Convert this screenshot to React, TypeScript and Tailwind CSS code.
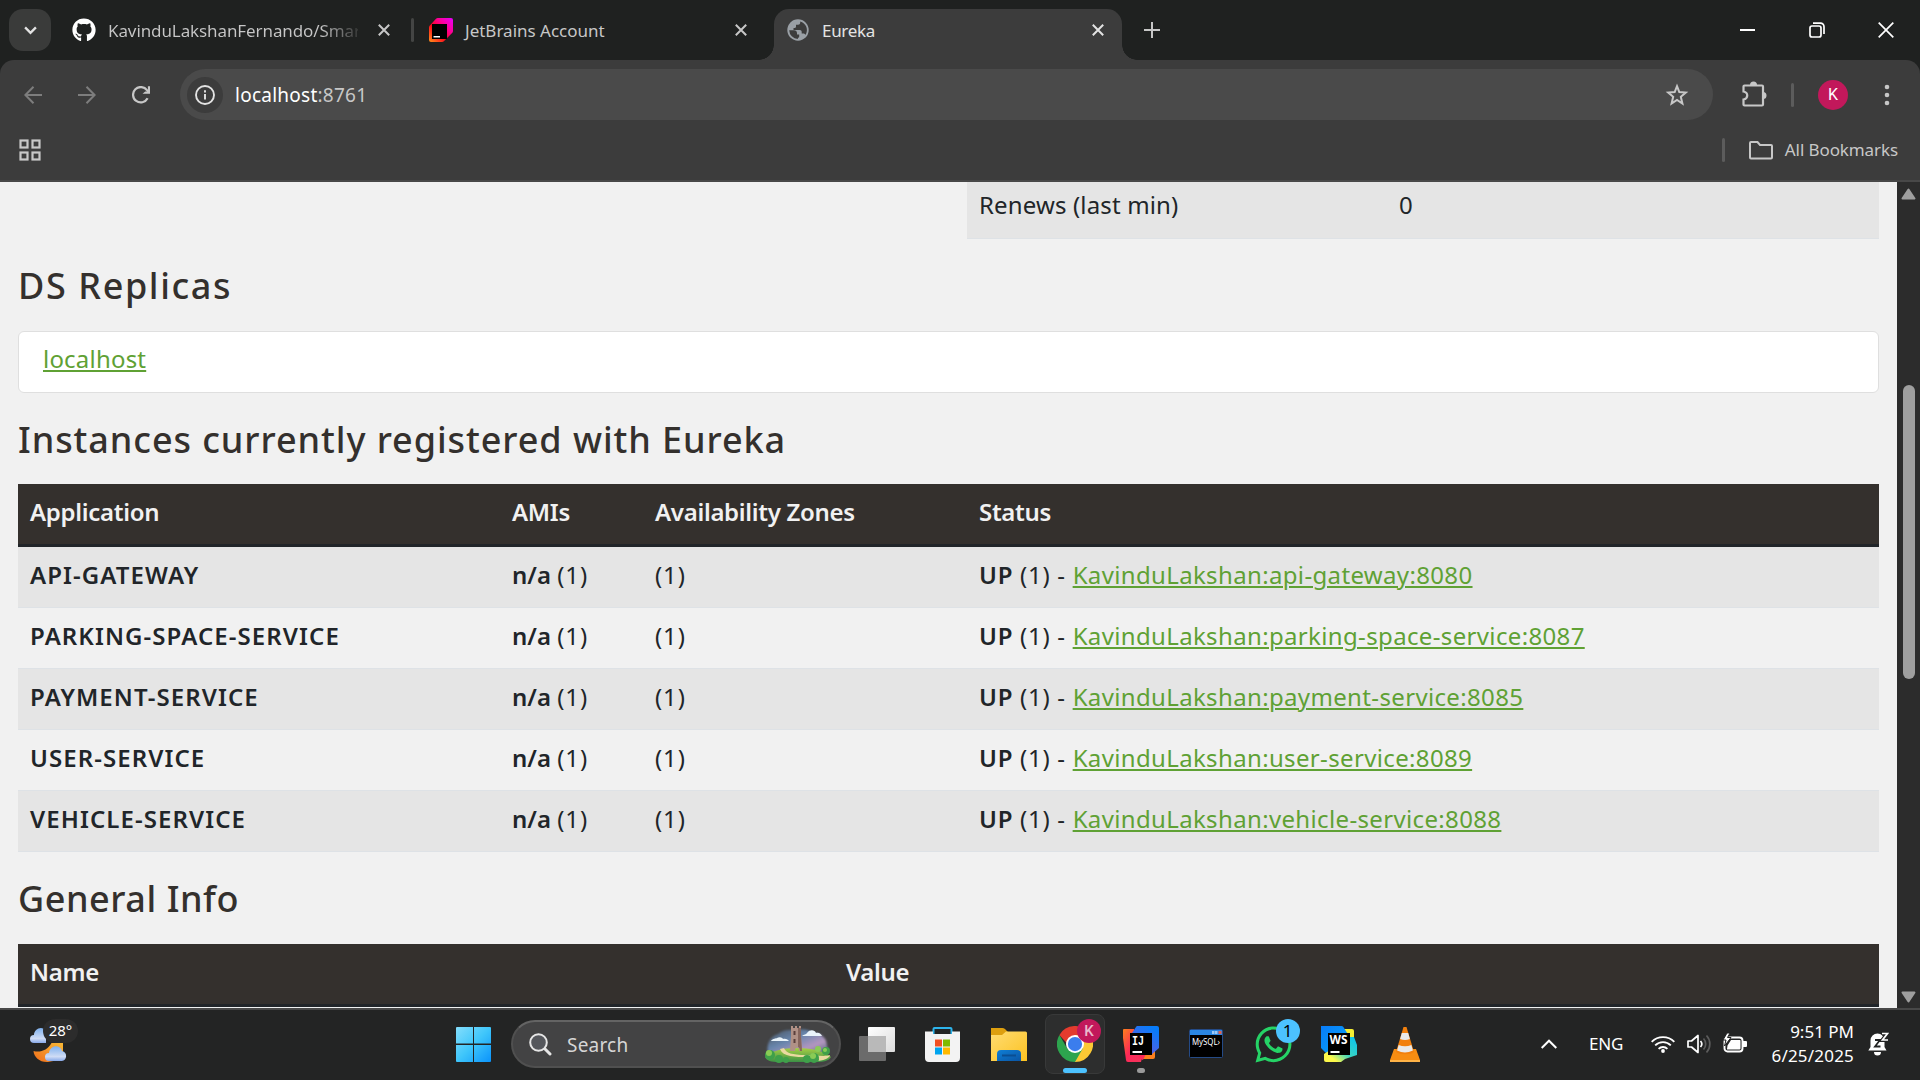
import type { ReactNode } from 'react';
import { FaGithub, FaWhatsapp } from 'react-icons/fa';

const instances = [
  { name: 'API-GATEWAY', link: 'KavinduLakshan:api-gateway:8080' },
  { name: 'PARKING-SPACE-SERVICE', link: 'KavinduLakshan:parking-space-service:8087' },
  { name: 'PAYMENT-SERVICE', link: 'KavinduLakshan:payment-service:8085' },
  { name: 'USER-SERVICE', link: 'KavinduLakshan:user-service:8089' },
  { name: 'VEHICLE-SERVICE', link: 'KavinduLakshan:vehicle-service:8088' },
];

function CloseX({ className }: { className: string }) {
  return (
    <svg viewBox="0 0 12 12" className={className} fill="none" stroke="currentColor" strokeWidth="2">
      <path d="M.8.8l10.4 10.4M11.2.8L.8 11.2" />
    </svg>
  );
}

function JetBrainsLogo() {
  return (
    <svg viewBox="0 0 24 24" className="ml-[15px] size-6 shrink-0">
      <defs>
        <linearGradient id="jb" x1="0" y1="1" x2="1" y2="0">
          <stop offset="0" stopColor="#ff9419" />
          <stop offset=".4" stopColor="#ff021d" />
          <stop offset=".65" stopColor="#ff0090" />
          <stop offset="1" stopColor="#e600ff" />
        </linearGradient>
      </defs>
      <path d="M9 0h13a2 2 0 0 1 2 2v11a3 3 0 0 1-.9 2.100l-8 8A3 3 0 0 1 13 24H2a2 2 0 0 1-2-2V9.500A3 3 0 0 1 .8 7.500l6-6.600A3 3 0 0 1 9 0z" fill="url(#jb)" />
      <path d="M3 6h15v15H3z" fill="#000" />
      <path d="M4.500 18h6.500v1.500H4.500z" fill="#fff" />
    </svg>
  );
}

function Globe() {
  return (
    <svg viewBox="0 0 22 22" className="ml-[13px] size-[22px] shrink-0">
      <circle cx="11" cy="11" r="10.700" fill="#9aa0a6" />
      <path d="M2.200 11.300H7c1.900 0 3 1.100 3 3v1.200h2.200v2c0 1-.8 1.300-1.300 1.500v1A9 9 0 0 1 2.200 11.300zM13.200 2.400v1.300c0 1.200-.9 2-2 2H9v2c0 .700-.500 1.200-1.200 1.200H6.500v2h6.200c1.300 0 2 .9 2 2v1.700h1.500c1.200 0 2 .6 2.300 1.300A9 9 0 0 0 13.200 2.400z" fill="#3c3c3c" />
    </svg>
  );
}

function TabStrip() {
  return (
    <div className="flex h-[60px] shrink-0 items-center bg-[#1f2120] text-[17px] text-[#c7c7c7]">
      <div className="ml-[9px] flex h-[42px] w-[42px] items-center justify-center rounded-[14px] bg-[#3a3b3a]">
        <svg viewBox="0 0 14 10" className="h-[9px] w-[13px]" fill="none" stroke="#e3e3e3" strokeWidth="2.600"><path d="M1 1.500l6 6 6-6" /></svg>
      </div>
      <FaGithub className="ml-[21px] size-6 shrink-0 text-white" />
      <div className="ml-3 w-[250px] bg-linear-to-r from-[#c7c7c7] from-85% to-[#3a3b3a] bg-clip-text pt-[2px] leading-6 tracking-[-0.100px] whitespace-nowrap text-transparent">KavinduLakshanFernando/Smar</div>
      <CloseX className="ml-5 size-3 shrink-0" />
      <div className="ml-[21px] h-6 w-[3px] rounded bg-[#444544]" />
      <JetBrainsLogo />
      <div className="ml-3 w-[250px] pt-[2px] leading-6">JetBrains Account</div>
      <CloseX className="ml-5 size-3 shrink-0" />
      <div className="ml-3 flex h-[51px] w-[378px] shrink-0 items-end self-end">
        <div className="size-[15px] shrink-0 bg-[radial-gradient(circle_at_0_0,transparent_14.500px,#3c3c3c_15px)]" />
        <div className="flex h-[51px] w-[348px] shrink-0 items-center rounded-t-[15px] bg-[#3c3c3c] pb-[9px] text-[#e3e3e3]">
          <Globe />
          <div className="ml-[13px] w-[270px] pt-[2px] leading-6 tracking-[-0.3px]">Eureka</div>
          <CloseX className="size-3 shrink-0" />
        </div>
        <div className="size-[15px] shrink-0 bg-[radial-gradient(circle_at_100%_0,transparent_14.500px,#3c3c3c_15px)]" />
      </div>
      <svg viewBox="0 0 16 16" className="ml-[7px] size-4 shrink-0" stroke="currentColor" strokeWidth="2"><path d="M8 0v16M0 8h16" /></svg>
      <div className="ml-auto flex items-center text-white">
        <div className="h-[2px] w-[15px] bg-white" />
        <svg viewBox="0 0 16 16" className="ml-[54px] size-4" fill="none" stroke="currentColor" strokeWidth="1.700">
          <rect x="1" y="4" width="11" height="11" rx="2" />
          <path d="M4 1.200h7.500a3.500 3.500 0 0 1 3.500 3.500V12" />
        </svg>
        <svg viewBox="0 0 16 16" className="mr-[26px] ml-[53px] size-4" stroke="currentColor" strokeWidth="1.700"><path d="M.7.7l14.600 14.600M15.300.7L.7 15.300" /></svg>
      </div>
    </div>
  );
}

function Toolbar() {
  return (
    <div className="h-[122px] shrink-0 bg-[#1f2120]">
      <div className="h-[122px] rounded-t-[14px] border-b-2 border-[#484848] bg-[#3c3c3c] text-[#c7c7c7]">
        <div className="flex h-[69px] items-center">
          <svg viewBox="0 0 18 18" className="ml-6 size-[18px]" fill="none" stroke="#7d7d7d" strokeWidth="2"><path d="M18 9H1.500M9.500.8L1.400 9l8.100 8.200" /></svg>
          <svg viewBox="0 0 18 18" className="ml-9 size-[18px]" fill="none" stroke="#7d7d7d" strokeWidth="2"><path d="M0 9h16.500M8.500.8L16.600 9l-8.100 8.200" /></svg>
          <svg viewBox="0 0 18 18" className="ml-9 size-[18px]">
            <path d="M15.600 12.300A7.700 7.700 0 1 1 15 4.200l1.700 2.200" fill="none" stroke="#c7c7c7" strokeWidth="2.200" />
            <path d="M18 .3v7.500h-7.500l2.700-2.300h2.700V.3z" fill="#c7c7c7" />
          </svg>
          <div className="ml-[30px] flex h-[51px] w-[1533px] items-center rounded-full bg-[#4a4a4a]">
            <div className="ml-[7px] flex size-9 items-center justify-center rounded-full bg-[#3c3c3c]">
              <svg viewBox="0 0 20 20" className="size-5" fill="none" stroke="#e3e3e3" strokeWidth="1.900"><circle cx="10" cy="10" r="9" /><path d="M10 9v5.500M10 5.200v2.200" /></svg>
            </div>
            <div className="ml-3 text-[19px] leading-6 tracking-[0.250px]"><span className="text-white">localhost</span>:8761</div>
            <svg viewBox="0 0 24 24" className="mr-6 ml-auto size-6" fill="none" stroke="#c7c7c7" strokeWidth="2"><path d="M12 3.200l2.300 5.900 6.500.5-5 4.200 1.600 6.700L12 16.900l-5.400 3.600 1.600-6.700-5-4.200 6.500-.5z" /></svg>
          </div>
          <svg viewBox="0 0 26 26" className="-mt-px ml-7 size-[26px]">
            <path d="M3.500 4.500h17.500a1 1 0 0 1 1 1v18a1 1 0 0 1-1 1H3.500a1 1 0 0 1-1-1v-5c5-1 5-7 0-8v-5a1 1 0 0 1 1-1z" fill="none" stroke="#c7c7c7" strokeWidth="2.200" />
            <path d="M9 4a3.500 3.500 0 0 1 7 0zM22 11a3.500 3.500 0 0 1 0 7z" fill="#c7c7c7" />
          </svg>
          <div className="ml-6 h-6 w-[3px] rounded bg-[#5c5c5c]" />
          <div className="ml-6 flex size-[30px] items-center justify-center rounded-full bg-[#c2185b] pt-px font-['Roboto'] text-base text-white">K</div>
          <svg viewBox="0 0 6 22" className="ml-9 h-[22px] w-[6px]" fill="#c7c7c7"><circle cx="3" cy="3" r="2.300" /><circle cx="3" cy="11" r="2.300" /><circle cx="3" cy="19" r="2.300" /></svg>
        </div>
        <div className="flex h-[42px] items-center">
          <svg viewBox="0 0 22 22" className="ml-[19px] size-[22px]" fill="none" stroke="#c7c7c7" strokeWidth="2.200">
            <rect x="1.500" y="1.500" width="7" height="7" /><rect x="13.500" y="1.500" width="7" height="7" /><rect x="1.500" y="13.500" width="7" height="7" /><rect x="13.500" y="13.500" width="7" height="7" />
          </svg>
          <div className="ml-auto h-6 w-[3px] rounded bg-[#5c5c5c]" />
          <svg viewBox="0 0 24 20" className="ml-6 h-5 w-6" fill="none" stroke="#c7c7c7" strokeWidth="2"><path d="M2 2h6.500l2.500 3h11a1 1 0 0 1 1 1v11.500a1 1 0 0 1-1 1H2a1 1 0 0 1-1-1V3a1 1 0 0 1 1-1z" /></svg>
          <div className="mr-[22px] ml-3 text-[17px] leading-6 tracking-[-0.1px] whitespace-nowrap">All Bookmarks</div>
        </div>
      </div>
    </div>
  );
}

function Link({ children }: { children: ReactNode }) {
  return <a className="text-[#5fa134] underline decoration-2 underline-offset-2">{children}</a>;
}

function EurekaPage() {
  return (
    <div className="h-full w-[1897px] overflow-hidden bg-[#f1f1f1] pr-[18px] pl-[18px] text-[24px] leading-9 text-[#212529]">
      <div className="ml-[949px] grid h-[57px] grid-cols-[420px_1fr] border-b border-[#dee2e6] bg-[#e5e5e5] px-3 pt-[5px]">
        <div className="tracking-[0.15px]">Renews (last min)</div>
        <div className="tracking-[0.200px]">0</div>
      </div>
      <h1 className="mt-[25px] text-[36px] leading-[43px] font-medium tracking-[1.600px] text-[#34302d]">DS Replicas</h1>
      <div className="mt-6 h-[62px] rounded-md border border-[#dfdfdf] bg-white pt-[9px] pl-6 leading-9 tracking-[0.200px]"><Link>localhost</Link></div>
      <h1 className="mt-[25px] text-[36px] leading-[43px] font-medium tracking-[0.930px] text-[#34302d]">Instances currently registered with Eureka</h1>
      <div className="mt-[23px]">
        <div className="grid h-[63px] grid-cols-[482px_143px_324px_1fr] border-b-[3px] border-[#212529] bg-[#34302d] pt-[10px] pl-3 font-semibold tracking-[-0.300px] text-[#f1f1f1]">
          <div>Application</div><div>AMIs</div><div>Availability Zones</div><div>Status</div>
        </div>
        {instances.map((row) => (
          <div key={row.name} className="grid h-[61px] grid-cols-[482px_143px_324px_1fr] border-b border-[#dee2e6] pt-[10px] pl-3 odd:bg-[#f1f1f1] even:bg-[#e5e5e5]">
            <div className="font-semibold tracking-[1.080px]">{row.name}</div>
            <div><b className="font-semibold">n/a</b> <span className="tracking-[0.900px]">(1)</span></div>
            <div className="tracking-[0.900px]">(1)</div>
            <div className="tracking-[0.350px]"><b className="font-semibold tracking-[0.900px]">UP</b> <span className="tracking-[0.700px]">(1) - </span><Link>{row.link}</Link></div>
          </div>
        ))}
      </div>
      <h1 className="mt-[25px] text-[36px] leading-[43px] font-medium tracking-[0.550px] text-[#34302d]">General Info</h1>
      <div className="mt-6 grid h-[63px] grid-cols-[816px_1fr] border-b-[3px] border-[#212529] bg-[#34302d] pt-[10px] pl-3 font-semibold tracking-[-0.300px] text-[#f1f1f1]">
        <div>Name</div><div>Value</div>
      </div>
    </div>
  );
}

function Scrollbar() {
  return (
    <div className="flex w-[23px] flex-col items-center bg-[#2c2c2c]">
      <svg viewBox="0 0 15 12" className="mt-[6px] h-3 w-[15px]" fill="#9f9f9f" stroke="#9f9f9f" strokeWidth="2" strokeLinejoin="round"><path d="M7.500 1.500l6 9h-12z" /></svg>
      <div className="mt-[185px] h-[294px] w-3 rounded-full bg-[#9f9f9f]" />
      <svg viewBox="0 0 15 12" className="mt-auto mb-[5px] h-3 w-[15px]" fill="#9f9f9f" stroke="#9f9f9f" strokeWidth="2" strokeLinejoin="round"><path d="M7.500 10.500l6-9h-12z" /></svg>
    </div>
  );
}

function CastleArt() {
  return (
    <svg viewBox="0 0 68 38" className="mr-[7px] ml-auto h-[38px] w-[68px]">
      <defs>
        <linearGradient id="sky" x1="0" y1="0" x2="1" y2="1"><stop offset="0" stopColor="#4a5560" /><stop offset=".4" stopColor="#6f92c0" /><stop offset=".7" stopColor="#c9a6d6" /><stop offset="1" stopColor="#45647a" /></linearGradient>
        <linearGradient id="hill" x1="0" y1="0" x2="0" y2="1"><stop offset="0" stopColor="#a8cf45" /><stop offset="1" stopColor="#3c9146" /></linearGradient>
        <filter id="haze"><feGaussianBlur stdDeviation="1.200" /></filter>
      </defs>
      <path d="M4 28C2 20 6 11 14 9c5-5 12-4 17-4 8-2 14 0 19 3 8 0 13 6 13 13 2 4 0 7-2 9z" fill="url(#sky)" opacity=".85" filter="url(#haze)" />
      <path d="M7 16c2-3 5-2 6-3 3-2 6 0 6 1 3-1 5 1 6 2zM38 11c2-2 4-1 5-3 3-4 8-3 9 0 3-1 5 1 6 3z" fill="#e9f3fa" />
      <path d="M1 32c6-6 18-9 33-9s28 4 33 9c-2 4-8 5-14 5H14C7 37 3 36 1 32z" fill="url(#hill)" />
      <path d="M16 24c3 8 15 8 28 8 9 0 13 2 10 4 8-1 12-4 12-6-5 2-15 0-24 0-14 0-20-2-22-7z" fill="#ead9a0" />
      <path d="M27 1h2v2h2V1h2v2h2V1h2v10l1 15h-3c0-5-4-5-4 0h-5l1-15z" fill="#b09186" />
      <path d="M34 3h3v8l1 15h-2c0-3-1-4-2-4z" fill="#86665d" />
      <path d="M29.500 6h2v4h-2zM29.500 14h2v4h-2z" fill="#5b403d" />
      <g fill="#3fa04a"><circle cx="6" cy="30" r="5" /><circle cx="15" cy="34" r="4" /><circle cx="22" cy="35" r="3" /><circle cx="43" cy="34" r="4" /><circle cx="50" cy="33" r="5" /><circle cx="62" cy="26" r="4" /></g>
      <g fill="#8acb55"><circle cx="5" cy="28" r="3" /><circle cx="49" cy="31" r="3" /><circle cx="54" cy="24" r="3" /><circle cx="61" cy="25" r="2" /></g>
    </svg>
  );
}

function Cell({ children }: { children: ReactNode }) {
  return <div className="flex h-full w-[66px] shrink-0 items-center justify-center">{children}</div>;
}

function Weather() {
  return (
    <div className="relative ml-[30px] h-[37px] w-[50px]">
      <svg viewBox="0 0 50 37" className="h-[37px] w-[50px]">
        <defs>
          <linearGradient id="cloud" x1="0" y1="0" x2="0" y2="1"><stop offset="0" stopColor="#7fb1ee" /><stop offset=".7" stopColor="#cfdcf5" /><stop offset="1" stopColor="#86a8e8" /></linearGradient>
          <linearGradient id="moon" x1="1" y1="0" x2="0" y2="1"><stop offset="0" stopColor="#f8b936" /><stop offset="1" stopColor="#ef6c1a" /></linearGradient>
        </defs>
        <path d="M3.500 25c7 2 14-1 18-8h11.500v8A16 16 0 0 1 17 36C9 36 4 31 3.500 25z" fill="url(#moon)" />
        <path d="M4 17a4 4 0 0 1 0-8C4 3 12-1 16 5v12z" fill="url(#cloud)" />
        <path d="M19 35a4 4 0 0 1 0-8c1-8 11-9 13-2 6 1 5 10 0 10z" fill="url(#cloud)" />
      </svg>
      <div className="absolute -top-[7px] left-[13px] flex h-6 w-[35px] items-center justify-center rounded-full bg-[#2c2c2c] pb-px text-[15px] text-white">28°</div>
    </div>
  );
}

function Taskbar() {
  return (
    <div className="flex h-[72px] shrink-0 items-center border-t-2 border-[#484848] bg-[#232424] pb-[2px] text-white">
      <Weather />
      <div className="ml-[360px] flex h-full items-center">
        <Cell>
          <svg viewBox="0 0 35 35" className="size-[35px]">
            <defs><linearGradient id="win" x1="0" y1="0" x2="35" y2="35" gradientUnits="userSpaceOnUse"><stop offset="0" stopColor="#84defc" /><stop offset=".5" stopColor="#3fc6fb" /><stop offset="1" stopColor="#0a93fb" /></linearGradient></defs>
            <path d="M1 0h16v16.500H0V1a1 1 0 0 1 1-1zM18 0h16a1 1 0 0 1 1 1v15.500H18zM0 18h17v17H1a1 1 0 0 1-1-1zM18 18h17v16a1 1 0 0 1-1 1H18z" fill="url(#win)" />
          </svg>
        </Cell>
        <div className="mr-[3px] ml-[5px] flex h-12 w-[330px] items-center rounded-full border-2 border-[#505050] border-t-[#646464] bg-[#434344]">
          <svg viewBox="0 0 23 23" className="ml-4 size-[23px]" fill="none" stroke="#e6e6e6" strokeLinecap="round"><circle cx="9.500" cy="9.500" r="8.300" strokeWidth="2" fill="#55575c" /><path d="M16 16l5 5" strokeWidth="3" /></svg>
          <div className="ml-[15px] pt-px text-[19px] leading-6 tracking-[0.200px] text-[#d6d6d6]">Search</div>
          <CastleArt />
        </div>
        <Cell>
          <svg viewBox="0 0 36 34" className="h-[34px] w-9">
            <defs><linearGradient id="tv" x1="0" y1="0" x2="1" y2="1"><stop offset="0" stopColor="#fff" /><stop offset="1" stopColor="#dcdcdc" /></linearGradient></defs>
            <rect x="9" width="27" height="25" rx="1" fill="url(#tv)" /><rect y="9" width="27" height="25" rx="1" fill="#6b6b6b" /><path d="M9 9h18v16H9z" fill="#b9b9b9" />
          </svg>
        </Cell>
        <Cell>
          <svg viewBox="0 0 35 35" className="mr-[2px] size-[35px]">
            <path d="M8.500 8V2a1 1 0 0 1 1-1h16a1 1 0 0 1 1 1v6" fill="none" stroke="#2db4ec" strokeWidth="2" />
            <path d="M0 4.500h8v2.500h19V4.500h8V31a4 4 0 0 1-4 4H4a4 4 0 0 1-4-4z" fill="#f3f3f3" />
            <path d="M10 12.500h7v7h-7z" fill="#f25022" /><path d="M18 12.500h7v7h-7z" fill="#7fba00" /><path d="M10 20.500h7v7h-7z" fill="#00a4ef" /><path d="M18 20.500h7v7h-7z" fill="#ffb900" />
          </svg>
        </Cell>
        <Cell>
          <svg viewBox="0 0 36 35" className="h-[35px] w-9">
            <defs><linearGradient id="fold" x1="0" y1="0" x2="1" y2="1"><stop offset="0" stopColor="#ffdc72" /><stop offset="1" stopColor="#fcc221" /></linearGradient><linearGradient id="fb" x1="0" y1="0" x2="1" y2="1"><stop offset="0" stopColor="#0f7fd6" /><stop offset="1" stopColor="#0a55a4" /></linearGradient></defs>
            <path d="M0 1h11a4 4 0 0 1 3 1l3 3v8H0z" fill="#dd9f0f" /><path d="M0 8h11l4-3.500h19.500a1.500 1.500 0 0 1 1.500 1.500V34H0z" fill="url(#fold)" />
            <path d="M6 34V27a4 4 0 0 1 4-4h16a4 4 0 0 1 4 4v7z" fill="url(#fb)" /><path d="M11 27.500h14v2H11z" fill="#0a4e92" />
          </svg>
        </Cell>
        <Cell>
          <div className="relative flex h-[60px] w-[60px] shrink-0 items-center justify-center rounded-lg border border-[#383939] bg-[#2d2e2e]">
            <svg viewBox="0 0 48 48" className="size-9">
              <path d="M24 24V12h20.800A24 24 0 0 1 24 48z" fill="#fcc934" />
              <path d="M24 24l10.400 6L24 48A24 24 0 0 1 3.200 12L13.600 30z" fill="#2da44e" /><path d="M24 24H14L3.200 12A24 24 0 0 1 44.800 12H24z" fill="#e33b2e" />
              <circle cx="24" cy="24" r="12" fill="#fff" /><circle cx="24" cy="24" r="9.500" fill="#3b7ded" />
            </svg>
            <div className="absolute top-1 right-[3px] flex size-6 items-center justify-center rounded-full bg-[#c2185b] font-['Roboto'] text-[15px] font-medium text-[#e9b9cd]">K</div>
            <div className="absolute bottom-0 left-[17px] h-[5px] w-6 rounded-full bg-[#4cc2ff]" />
          </div>
        </Cell>
        <Cell>
          <div className="relative">
            <svg viewBox="0 0 36 36" className="size-9">
              <defs><linearGradient id="ij" x1="0" y1="0" x2="1" y2="1"><stop offset="0" stopColor="#fc801d" /><stop offset=".5" stopColor="#fe2857" /><stop offset="1" stopColor="#f0365c" /></linearGradient><linearGradient id="ijb" x1="0" y1="1" x2=".6" y2="0"><stop offset="0" stopColor="#7a50d8" /><stop offset="1" stopColor="#087cfa" /></linearGradient></defs>
              <path d="M18 14h14v17a2 2 0 0 1-2 2H18z" fill="#fc801d" /><path d="M0 4a1 1 0 0 1 1-1h10v18l10 2-3 13H5a2 2 0 0 1-2-2L0 12z" fill="url(#ij)" /><path d="M20 22h6l-6 12-5-2z" fill="#fe2857" />
              <path d="M9 7l4-6a2 2 0 0 1 2-1h19a2 2 0 0 1 2 2v20l-8 7H18z" fill="url(#ijb)" /><path d="M7 7h22v22H7z" /><path d="M9.500 25h9.500v2H9.500z" fill="#fff" />
              <text x="9" y="18.500" fill="#fff" fontSize="13" fontWeight="700" fontFamily="Liberation Mono, monospace" textLength="12" lengthAdjust="spacingAndGlyphs">IJ</text>
            </svg>
            <div className="absolute -bottom-[11px] left-[14px] h-[5px] w-2 rounded-full bg-[#9a9a9a]" />
          </div>
        </Cell>
        <Cell>
          <svg viewBox="0 0 34 29" className="mr-[2px] mb-px h-[29px] w-[34px]">
            <rect x=".5" y=".5" width="33" height="28" rx="1" fill="#000" stroke="#244a86" />
            <path d="M1 1h32v5H1z" fill="#2a86e2" /><path d="M23 2h2.500v3H23zM26 2h2.500v3H26z" fill="#9cc8f5" /><path d="M29.500 2h3v3h-3z" fill="#e0604e" />
            <text x="3" y="16" fill="#fff" fontSize="9" fontFamily="Noto Sans, sans-serif" textLength="28" lengthAdjust="spacingAndGlyphs">MySQL›</text>
          </svg>
        </Cell>
        <Cell>
          <div className="relative">
            <FaWhatsapp className="size-[41px] text-[#25d366]" />
            <div className="absolute -top-[5px] left-[23px] flex size-6 items-center justify-center rounded-full bg-[#4cc2ff] text-[17px] text-black">1</div>
          </div>
        </Cell>
        <Cell>
          <svg viewBox="0 0 36 36" className="size-9">
            <defs><linearGradient id="wsb" x1="0" y1="0" x2="1" y2="1"><stop offset="0" stopColor="#087cfa" /><stop offset="1" stopColor="#07a5f2" /></linearGradient><linearGradient id="wsy" x1="0" y1="1" x2="1" y2="0"><stop offset=".2" stopColor="#fcf84a" /><stop offset=".5" stopColor="#3bd4c0" /><stop offset="1" stopColor="#07c3f2" /></linearGradient></defs>
            <path d="M20 3h11a2 2 0 0 1 2 2v13H20z" fill="#f4ee34" /><path d="M0 0h20a3 3 0 0 1 3 2l5 8-15 17H5L0 22z" fill="url(#wsb)" /><path d="M3 28l25-17h5l3 8v10l-12 4-4 3H5a2 2 0 0 1-2-2z" fill="url(#wsy)" />
            <path d="M7 7h22v22H7z" /><path d="M9.500 25h9v2h-9z" fill="#fff" /><text x="8.500" y="18" fill="#fff" fontSize="11.500" fontWeight="700" fontFamily="Noto Sans, sans-serif" textLength="18" lengthAdjust="spacingAndGlyphs">WS</text>
          </svg>
        </Cell>
        <Cell>
          <svg viewBox="0 0 30 35" className="h-[35px] w-[30px]">
            <path d="M4 22h22l4 11v2H0v-2z" fill="#f78d12" /><path d="M0 33h30v2H0z" fill="#ffb347" />
            <path d="M13.500 0h3L24 25c-3 3-15 3-18 0z" fill="#f2800d" /><path d="M11.800 6h6.400l1.700 6q-5 2-9.800 0zM8.600 18q6.500 2.500 12.800 0l1.500 5.500q-8 4-15.800 0z" fill="#e9e9e9" />
          </svg>
        </Cell>
      </div>
      <div className="ml-auto flex items-center">
        <svg viewBox="0 0 16 10" className="h-[10px] w-4" fill="none" stroke="#fff" strokeWidth="2"><path d="M.7 9L8 1.700 15.300 9" /></svg>
        <div className="ml-8 w-[62px] text-[17px] leading-6 tracking-[-0.200px]">ENG</div>
        <svg viewBox="0 0 24 18" className="h-[18px] w-6" fill="none" stroke="#fff" strokeWidth="1.900"><path d="M.7 6.800a16 16 0 0 1 22.600 0M4.200 10.400a11 11 0 0 1 15.600 0M7.600 13.800a6.200 6.200 0 0 1 8.800 0" /><circle cx="12" cy="16" r="1.900" fill="#fff" stroke="none" /></svg>
        <svg viewBox="0 0 24 20" className="ml-3 h-5 w-6" fill="none" stroke="#fff" strokeWidth="1.700" strokeLinejoin="round"><path d="M1 7h3.500L11 1.500v17L4.500 13H1z" /><path d="M13.500 7a4.500 4.500 0 0 1 0 6" /><path d="M16.500 4.500a8 8 0 0 1 0 11M19.500 1.500a12.500 12.500 0 0 1 0 17" stroke="#5c5c5c" /></svg>
        <svg viewBox="0 0 24 20" className="mb-[2px] ml-3 h-5 w-6"><rect x="1.500" y="4.500" width="18" height="14" rx="3" fill="none" stroke="#fff" strokeWidth="1.900" /><path d="M4 16l.5-3.500L8 7h9a.8.8 0 0 1 .5.800V15.500a1 1 0 0 1-1 1H4zM20 8h3a1 1 0 0 1 1 1v4a1 1 0 0 1-1 1h-3z" fill="#fff" /><path d="M4 0L0 7h3l-1.500 6L8 4.500H4.500L7 0z" fill="#fff" stroke="#232424" strokeWidth="1" /></svg>
        <div className="ml-[12px] w-[95px] text-right text-[17px] leading-6 whitespace-nowrap"><div>9:51 PM</div><div className="tracking-[0.200px]">6/25/2025</div></div>
        <svg viewBox="0 0 21 24" className="mr-[31px] ml-[14px] h-6 w-[21px]">
          <path d="M2.500 15V8.500a7 7 0 0 1 14 0V15l2 3.500H.3zM6 20h7a3.500 3.500 0 0 1-7 0z" fill="#fff" />
          <path d="M7 8h5l-5 6.500h5.500" fill="none" stroke="#232424" strokeWidth="1.800" /><path d="M14 1.500h5.500L14.500 8H20" fill="none" stroke="#232424" strokeWidth="4" /><path d="M14 1.500h5.500L14.500 8H20" fill="none" stroke="#fff" strokeWidth="1.700" />
        </svg>
      </div>
    </div>
  );
}

export default function App() {
  return (
    <div className="flex h-[1080px] w-[1920px] flex-col overflow-hidden font-['Noto_Sans',sans-serif]">
      <TabStrip />
      <Toolbar />
      <div className="flex h-[826px] shrink-0">
        <EurekaPage />
        <Scrollbar />
      </div>
      <Taskbar />
    </div>
  );
}
